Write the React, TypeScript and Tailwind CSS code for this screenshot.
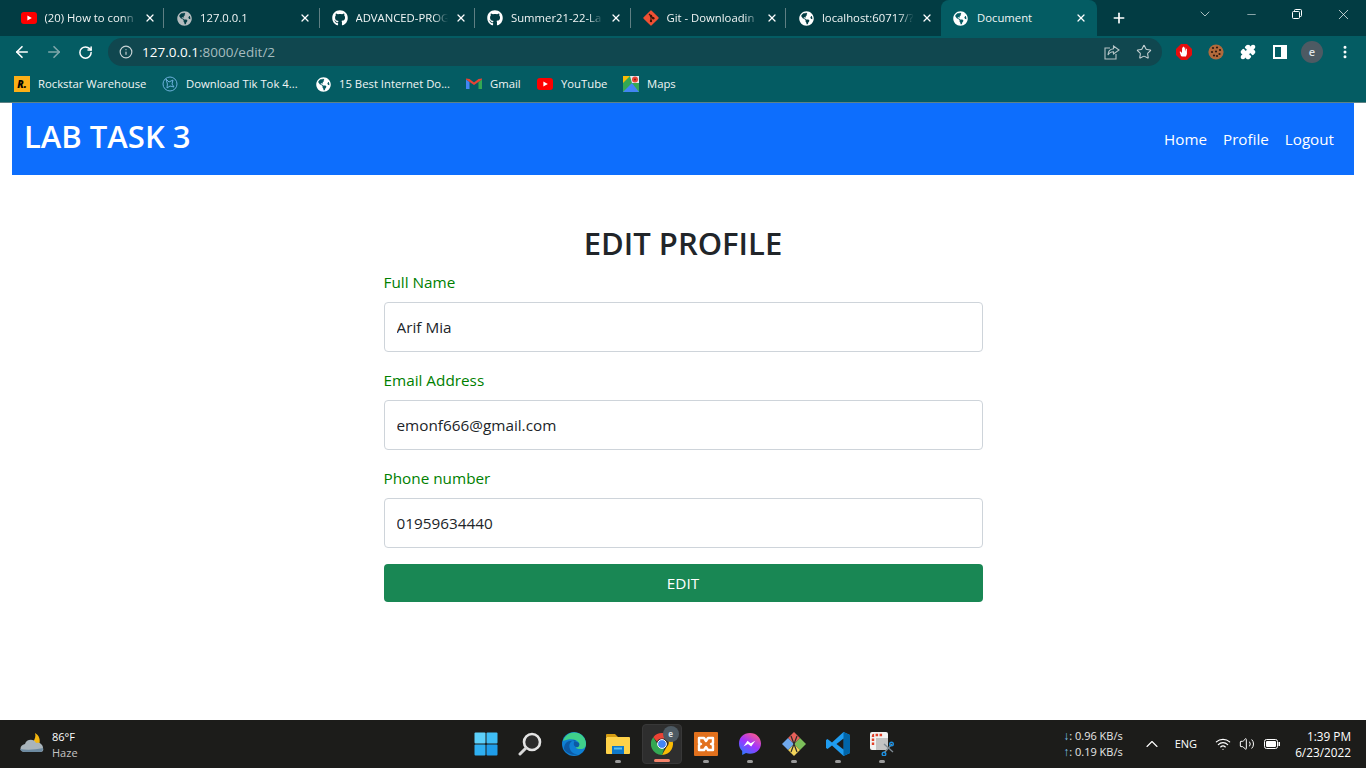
import React from 'react';
import { ArrowLeft, ArrowRight, RotateCw, Info, Star, Puzzle, X, Plus, ChevronDown, ChevronUp, Minus, Wifi, Volume2, EllipsisVertical } from 'lucide-react';
import { FaGithub, FaGlobeAmericas } from 'react-icons/fa';

const font = 'font-["Open_Sans","Noto_Sans",sans-serif]';

const YoutubeIcon = () => (
  <svg width="16" height="12" viewBox="0 0 16 12">
    <rect width="16" height="12" rx="3" fill="#f00" />
    <path d="M6.4 3.4 10.8 6l-4.4 2.6z" fill="#fff" />
  </svg>
);

const GitIcon = () => (
  <svg width="16" height="16" viewBox="0 0 16 16">
    <rect x="2.3" y="2.3" width="11.4" height="11.4" rx="1" transform="rotate(45 8 8)" fill="#f05033" />
    <path d="M6 4l4 4M8 6v6" stroke="#3a1408" strokeWidth="1.1" />
    <circle cx="8" cy="6" r="1.2" fill="#3a1408" />
    <circle cx="8" cy="11" r="1.2" fill="#3a1408" />
    <circle cx="10.3" cy="8.3" r="1.2" fill="#3a1408" />
  </svg>
);

const tabs = [
  { title: '(20) How to conn', icon: <YoutubeIcon /> },
  { title: '127.0.0.1', icon: <FaGlobeAmericas className="text-[#b4bcbe]" size={15} /> },
  { title: 'ADVANCED-PROG', icon: <FaGithub className="text-white" size={16} /> },
  { title: 'Summer21-22-La', icon: <FaGithub className="text-white" size={16} /> },
  { title: 'Git - Downloadin', icon: <GitIcon /> },
  { title: 'localhost:60717/?', icon: <FaGlobeAmericas className="text-white" size={15} /> },
];

const Tab = ({ title, icon, last }: { title: string; icon: React.ReactNode; last: boolean }) => (
  <div className="flex items-center w-[155.5px] h-[36px] shrink-0 pl-[12px]">
    <div className="w-[16px] flex justify-center shrink-0">{icon}</div>
    <div className="ml-[8px] w-[92px] overflow-hidden whitespace-nowrap text-[11.3px] text-[#f1f5f5] [mask-image:linear-gradient(to_right,black_84%,transparent)]">
      {title}
    </div>
    <X size={12} strokeWidth={2.5} className="ml-[7px] text-white shrink-0" />
    <div className={`ml-auto w-px h-[20px] ${last ? 'bg-transparent' : 'bg-[#5f7f83]'}`} />
  </div>
);

const TabBar = () => (
  <div className="flex h-[36px] bg-[#023c43] pl-[8.5px]">
    {tabs.map((t, i) => (
      <Tab key={t.title} title={t.title} icon={t.icon} last={i === tabs.length - 1} />
    ))}
    <div className="flex items-center w-[156px] h-[36px] shrink-0 -ml-[0.5px] pl-[12px] pr-[10px] bg-[#045c63] rounded-t-[8px]">
      <FaGlobeAmericas className="text-white" size={15} />
      <span className="ml-[9px] text-[11.3px] text-[#f1f5f5]">Document</span>
      <X size={12} strokeWidth={2.5} className="ml-auto text-white" />
    </div>
    <div className="flex items-center ml-[14px]">
      <Plus size={16} strokeWidth={2.5} className="text-white" />
    </div>
    <div className="flex ml-auto h-[28px] items-center text-white">
      <div className="w-[46px] flex justify-center"><ChevronDown size={16} strokeWidth={1} /></div>
      <div className="w-[46px] flex justify-center"><Minus size={13} strokeWidth={1} /></div>
      <div className="w-[46px] flex justify-center">
        <svg width="10" height="10" viewBox="0 0 10 10" fill="none" stroke="currentColor" strokeWidth="1">
          <rect x="0.5" y="2.5" width="7" height="7" rx="1" />
          <path d="M2.5 2.5V1.5a1 1 0 0 1 1-1h5a1 1 0 0 1 1 1v5a1 1 0 0 1-1 1h-1" />
        </svg>
      </div>
      <div className="w-[46px] flex justify-center"><X size={17} strokeWidth={1} /></div>
    </div>
  </div>
);

const ShareIcon = () => (
  <svg width="16" height="15" viewBox="0 0 16 15" fill="none" stroke="#b5c4c6" strokeWidth="1.1">
    <path d="M6 3H1v11h11V9" />
    <path d="M9.5 1 15 5l-5.5 4V6.8C7 6.8 5 8 4 10c0-3.5 2.2-6 5.5-6.3z" />
  </svg>
);

const AdblockIcon = () => (
  <svg width="16" height="16" viewBox="0 0 16 16">
    <path d="M5 0h6l5 5v6l-5 5H5l-5-5V5z" fill="#e60c0c" />
    <path d="M5 12 3.6 7.8l1-.4L6 9V3.6h.8l.2 3.4V2.8h1l.2 4V3.4h1v4l.8-2.6h.9V10L10 12.6H6z" fill="#fff" />
  </svg>
);

const CookieIcon = () => (
  <svg width="16" height="16" viewBox="0 0 16 16">
    <circle cx="8" cy="8" r="7.6" fill="#b26a3c" />
    {[[5, 4], [9, 3.5], [12, 6], [4, 8], [8, 7.5], [11.5, 10], [6, 11.5], [9, 12]].map(([x, y]) => (
      <circle key={`${x}-${y}`} cx={x} cy={y} r="1.1" fill="#2d1a10" />
    ))}
  </svg>
);

const Toolbar = () => (
  <div className="flex items-center h-[32px] bg-[#045c63]">
    <ArrowLeft size={18} strokeWidth={2.2} className="ml-[13px] text-white" />
    <ArrowRight size={18} strokeWidth={2.2} className="ml-[14px] text-[#7fa6aa]" />
    <RotateCw size={15} strokeWidth={2.4} className="ml-[15px] text-white" />
    <div className="ml-[15px] w-[1054px] h-[28px] rounded-full bg-[#10474f] flex items-center pl-[11px] pr-[10px]">
      <Info size={14} className="text-[#c8d3d5]" />
      <span className="ml-[9px] text-[13.5px] text-white">127.0.0.1<span className="text-[#a6bcbf]">:8000/edit/2</span></span>
      <div className="ml-auto flex items-center gap-[16px]">
        <ShareIcon />
        <Star size={16} strokeWidth={1.6} className="text-[#c4d0d2]" />
      </div>
    </div>
    <div className="ml-[14px]"><AdblockIcon /></div>
    <div className="ml-[16px]"><CookieIcon /></div>
    <Puzzle size={16} fill="white" className="ml-[16px] text-white" />
    <div className="ml-[17px] w-[14px] h-[14px] border-[2px] border-white flex justify-end">
      <div className="w-[4px] bg-white" />
    </div>
    <div className="ml-[14px] w-[22px] h-[22px] rounded-full bg-[#4d5a63] flex items-center justify-center text-[11px] font-semibold text-[#dfe4e6]">e</div>
    <EllipsisVertical size={16} strokeWidth={2.5} className="ml-[14px] text-white" />
  </div>
);

const MapsIcon = () => (
  <svg width="16" height="16" viewBox="0 0 16 16">
    <rect width="16" height="16" fill="#34a853" />
    <path d="M0 16 9 7l7 9z" fill="#4285f4" />
    <path d="M0 0h7L0 7z" fill="#fbbc04" />
    <path d="M7 0h9v7L9 7z" fill="#e8eaed" />
    <circle cx="12" cy="3.5" r="3" fill="#ea4335" />
    <circle cx="12" cy="3.5" r="1" fill="#8c1d18" />
  </svg>
);

const GmailIcon = () => (
  <svg width="16" height="12" viewBox="0 0 16 12">
    <path d="M0 1.5v9.5h3.5V4z" fill="#4285f4" />
    <path d="M16 1.5v9.5h-3.5V4z" fill="#34a853" />
    <path d="M0 1.5 8 7l8-5.5V.5L12.5 1 8 4.5 3.5 1 0 .5z" fill="#ea4335" />
  </svg>
);

const bookmarks = [
  {
    title: 'Rockstar Warehouse',
    width: 'w-[148px]',
    icon: <div className="w-[16px] h-[16px] bg-[#fcaf17] text-[10px] font-extrabold italic text-black leading-[16px] text-center">R.</div>,
  },
  {
    title: 'Download Tik Tok 4...',
    width: 'w-[153px]',
    icon: (
      <svg width="16" height="16" viewBox="0 0 16 16" fill="none" stroke="#6cb1dc" strokeWidth="1">
        <circle cx="8" cy="8" r="7" />
        <path d="M4 3 7 6l4-2-1 4 2 3-4-1-3 2 .4-4z" />
      </svg>
    ),
  },
  { title: '15 Best Internet Do...', width: 'w-[151px]', icon: <FaGlobeAmericas className="text-white" size={15} /> },
  { title: 'Gmail', width: 'w-[71px]', icon: <GmailIcon /> },
  { title: 'YouTube', width: 'w-[86px]', icon: <YoutubeIcon /> },
  { title: 'Maps', width: 'w-[60px]', icon: <MapsIcon /> },
];

const BookmarksBar = () => (
  <div className="flex items-center h-[35px] pl-[14px] pb-[2px] bg-[#045c63] border-b border-[#5d8285]">
    {bookmarks.map(b => (
      <div key={b.title} className={`flex items-center ${b.width} shrink-0`}>
        <div className="w-[16px] flex justify-center shrink-0">{b.icon}</div>
        <span className="ml-[8px] text-[11.3px] text-[#f1f5f5] whitespace-nowrap">{b.title}</span>
      </div>
    ))}
  </div>
);

const Field = ({ label, value }: { label: string; value: string }) => (
  <div className="mb-[16px]">
    <label className="block text-[15.3px] leading-[24px] text-[#008000] mb-[8px]">{label}</label>
    <input
      readOnly
      value={value}
      className="block w-full h-[50px] px-[12px] text-[15.3px] text-[#212529] bg-white border border-[#ced4da] rounded-[4px] outline-none"
    />
  </div>
);

const Navbar = () => (
  <nav className="flex items-center justify-between h-[72px] bg-[#0d6efd] pl-[12px] pr-[20px]">
    <span className="text-[31px] font-semibold text-white pb-[6px]">LAB TASK 3</span>
    <div className="flex gap-[16px] text-[15.2px] text-white">
      <a>Home</a>
      <a>Profile</a>
      <a>Logout</a>
    </div>
  </nav>
);

const EditForm = () => (
  <form className="w-[599px] mx-auto pt-[48px]">
    <h1 className="text-[31px] leading-[40px] font-semibold text-[#212529] text-center mb-[7px]">EDIT PROFILE</h1>
    <Field label="Full Name" value="Arif Mia" />
    <Field label="Email Address" value="emonf666@gmail.com" />
    <Field label="Phone number" value="01959634440" />
    <button type="button" className="block w-full h-[38px] text-[15.3px] text-white bg-[#198754] rounded-[4px]">EDIT</button>
  </form>
);

const WeatherIcon = () => (
  <svg width="26" height="24" viewBox="0 0 26 24">
    <path d="M16 1c4 2 6 7 4 12l-6-3c2-3 3-6 2-9z" fill="#f5b70f" />
    <path d="M6 20c-6 0-6-7 0-8 1-5 9-6 11-1 3-1 7 1 7 5 1 3-1 4-3 4z" fill="#a9b4bb" />
    <path d="M6 20c-3 0-5-2-5-3 6 1 14 1 23-1 0 3-1 4-3 4z" fill="#6d8aa0" />
  </svg>
);

const WindowsIcon = () => (
  <svg width="24" height="24" viewBox="0 0 24 24">
    <rect x="0.5" y="0.5" width="11" height="11" rx="1" fill="#5dd0fa" />
    <rect x="12.5" y="0.5" width="11" height="11" rx="1" fill="#3fbdf6" />
    <rect x="0.5" y="12.5" width="11" height="11" rx="1" fill="#2fb0f2" />
    <rect x="12.5" y="12.5" width="11" height="11" rx="1" fill="#1f9dea" />
  </svg>
);

const SearchIcon = () => (
  <svg width="24" height="24" viewBox="0 0 24 24" fill="none">
    <circle cx="14" cy="10" r="8" stroke="#e3e3e3" strokeWidth="2.6" fill="#2b2b2b" />
    <path d="M8 16 2 22" stroke="#d8d8d8" strokeWidth="3" strokeLinecap="round" />
  </svg>
);

const EdgeIcon = () => (
  <svg width="24" height="24" viewBox="0 0 24 24">
    <circle cx="12" cy="12" r="12" fill="#0f7fd4" />
    <path d="M1 9C3 2 10-1 16 1c5 2 8 6 8 11 0 3-2 5-5 5-2 0-5 0-5-2 3 0 4-2 3-4C15 7 8 6 1 9z" fill="#3fd08a" />
    <path d="M17 11c1 3-1 5-3 4-3-1-3-5 0-7-5 0-8 4-6 9 1 3 4 6 9 5-5 2-12 0-15-5 0-7 6-11 15-6z" fill="#0c59a4" />
  </svg>
);

const FolderIcon = () => (
  <svg width="24" height="22" viewBox="0 0 24 22">
    <path d="M0 2a1 1 0 0 1 1-1h8l3 3h-12z" fill="#d59c12" />
    <rect y="4" width="24" height="17" rx="1" fill="#ffd249" />
    <rect x="6" y="13" width="12" height="8" fill="#0f78c9" />
    <rect x="8" y="14.5" width="8" height="2" fill="#5cc0f2" />
  </svg>
);

const ChromeIcon = () => (
  <svg width="22" height="22" viewBox="0 0 22 22">
    <path d="M11 0a11 11 0 0 1 9.6 5.6H11a5.5 5.5 0 0 0-5 3.2L2.3 4.2A11 11 0 0 1 11 0z" fill="#ea4335" />
    <path d="M20.6 5.6A11 11 0 0 1 11 22l4.6-8a5.5 5.5 0 0 0 .4-8.4z" fill="#fbbc04" />
    <path d="M2.3 4.2 6.9 12a5.5 5.5 0 0 0 6.7 2.6L11 22A11 11 0 0 1 2.3 4.2z" fill="#34a853" />
    <circle cx="11" cy="11" r="4.4" fill="#4285f4" stroke="#fff" strokeWidth="1" />
  </svg>
);

const XamppIcon = () => (
  <svg width="24" height="24" viewBox="0 0 24 24">
    <rect width="24" height="24" rx="1" fill="#e2711d" />
    <path d="M5 6h5l2 3 2-3h5v5l-2 1 2 1v5h-5l-2-3-2 3H5v-5l2-1-2-1z" fill="none" stroke="#fff" strokeWidth="2.4" strokeLinejoin="round" />
  </svg>
);

const MessengerIcon = () => (
  <svg width="24" height="24" viewBox="0 0 24 24">
    <defs>
      <linearGradient id="ms" x1="0.2" y1="1" x2="0.8" y2="0">
        <stop offset="0" stopColor="#2b7bff" />
        <stop offset="0.5" stopColor="#a033ff" />
        <stop offset="1" stopColor="#ff5c87" />
      </linearGradient>
    </defs>
    <path d="M12 1C5.5 1 1 5.5 1 11.5c0 3 1.2 5.6 3.2 7.4V23l3.8-2a12 12 0 0 0 4 .7c6.5 0 11-4.6 11-10.2S18.5 1 12 1z" fill="url(#ms)" />
    <path d="m5.5 14.5 4-5.8 3.2 2.6 4.5-2.6-4 5.8-3.2-2.6z" fill="#fff" />
  </svg>
);

const SourceIcon = () => (
  <svg width="24" height="24" viewBox="0 0 24 24">
    <path d="M12 0 18 6 12 12 6 6z" fill="#e7605a" />
    <path d="M18 6 24 12 18 18 12 12z" fill="#7cbf5a" />
    <path d="M12 12 18 18 12 24 6 18z" fill="#f2d35a" />
    <path d="M6 6 12 12 6 18 0 12z" fill="#6fa8ec" />
    <path d="M9 4l6 16M15 4 9 20" stroke="#2b2b2b" strokeWidth="1.2" />
  </svg>
);

const VscodeIcon = () => (
  <svg width="24" height="24" viewBox="0 0 24 24">
    <path d="M17.5 0 24 3v18l-6.5 3L6 13.5 1.5 17 0 16V8l1.5-1L6 10.5z" fill="#1f9cf0" />
    <path d="M17.5 0 24 3v18l-6.5 3z" fill="#0065a9" />
    <path d="M17.5 6.5 10.5 12l7 5.5z" fill="#1c1c1c" />
  </svg>
);

const SnipIcon = () => (
  <svg width="24" height="24" viewBox="0 0 24 24">
    <rect width="18" height="18" rx="2" fill="#f2f2f2" />
    <path d="M3 13V4a1 1 0 0 1 1-1h9" fill="none" stroke="#e2412a" strokeWidth="2.4" strokeDasharray="2.5 1.5" />
    <path d="M6 6h12v12H6z" fill="#c4c4c4" />
    <path d="M14 12 23 20M14 21l8-9" stroke="#7e8a93" strokeWidth="1.4" />
    <circle cx="21.5" cy="12" r="1.8" fill="none" stroke="#1b8fe0" strokeWidth="1.4" />
    <circle cx="14" cy="22" r="1.8" fill="none" stroke="#1b8fe0" strokeWidth="1.4" />
  </svg>
);

const TaskIcon = ({ icon, dot, active }: { icon: React.ReactNode; dot?: boolean; active?: boolean }) => (
  <div className={`relative w-[40px] h-[40px] mx-[2px] flex items-center justify-center rounded-[4px] ${active ? 'bg-[#2e2e2e] border border-[#383838]' : ''}`}>
    {icon}
    {dot && <div className={`absolute bottom-[1px] left-1/2 -translate-x-1/2 h-[3px] rounded-full ${active ? 'w-[16px] bg-[#f58269]' : 'w-[6px] bg-[#9a9a9a]'}`} />}
    {active && (
      <div className="absolute top-[1px] right-[2px] w-[16px] h-[16px] rounded-full bg-[#4d5a63] flex items-center justify-center text-[8px] font-bold text-[#dfe4e6]">e</div>
    )}
  </div>
);

const Taskbar = () => (
  <div className="grid grid-cols-[1fr_auto_1fr] items-center h-[48px] bg-[#1c1c1a] text-white">
    <div className="flex items-center pl-[19px]">
      <WeatherIcon />
      <div className="ml-[7px] pt-[2px] text-[11px] leading-[16px]">
        <div>86°F</div>
        <div className="text-[#c4c4c4]">Haze</div>
      </div>
    </div>
    <div className="flex items-center ml-[1px]">
      <TaskIcon icon={<WindowsIcon />} />
      <TaskIcon icon={<SearchIcon />} />
      <TaskIcon icon={<EdgeIcon />} />
      <TaskIcon icon={<FolderIcon />} dot />
      <TaskIcon icon={<ChromeIcon />} dot active />
      <TaskIcon icon={<XamppIcon />} dot />
      <TaskIcon icon={<MessengerIcon />} dot />
      <TaskIcon icon={<SourceIcon />} dot />
      <TaskIcon icon={<VscodeIcon />} dot />
      <TaskIcon icon={<SnipIcon />} dot />
    </div>
    <div className="flex items-center justify-end pr-[15px]">
      <div className="text-[11px] leading-[16px] text-[#e8e8e8]">
        <div><span className="text-[#7cc0ee] text-[12px]">↓</span>: 0.96 KB/s</div>
        <div><span className="text-[#7cc0ee] text-[12px]">↑</span>: 0.19 KB/s</div>
      </div>
      <ChevronUp size={20} strokeWidth={1.3} className="ml-[19px]" />
      <span className="ml-[13px] text-[11px] font-medium">ENG</span>
      <Wifi size={16} strokeWidth={1.8} className="ml-[18px]" />
      <Volume2 size={16} strokeWidth={1.5} className="ml-[8px]" />
      <svg width="16" height="10" viewBox="0 0 16 10" className="ml-[9px]">
        <rect x="0.5" y="0.5" width="13" height="9" rx="2" fill="none" stroke="#fff" />
        <rect x="2" y="2" width="10" height="6" rx="1" fill="#fff" />
        <rect x="14.5" y="3" width="1.5" height="4" fill="#fff" />
      </svg>
      <div className="ml-[15px] text-[11.8px] leading-[16px] text-right">
        <div>1:39 PM</div>
        <div>6/23/2022</div>
      </div>
    </div>
  </div>
);

const App: React.FC = () => {
  return (
    <div className={`flex flex-col h-screen overflow-hidden bg-white ${font}`}>
      <TabBar />
      <Toolbar />
      <BookmarksBar />
      <main className="flex-1 px-[12px]">
        <Navbar />
        <EditForm />
      </main>
      <Taskbar />
    </div>
  );
};

export default App;
